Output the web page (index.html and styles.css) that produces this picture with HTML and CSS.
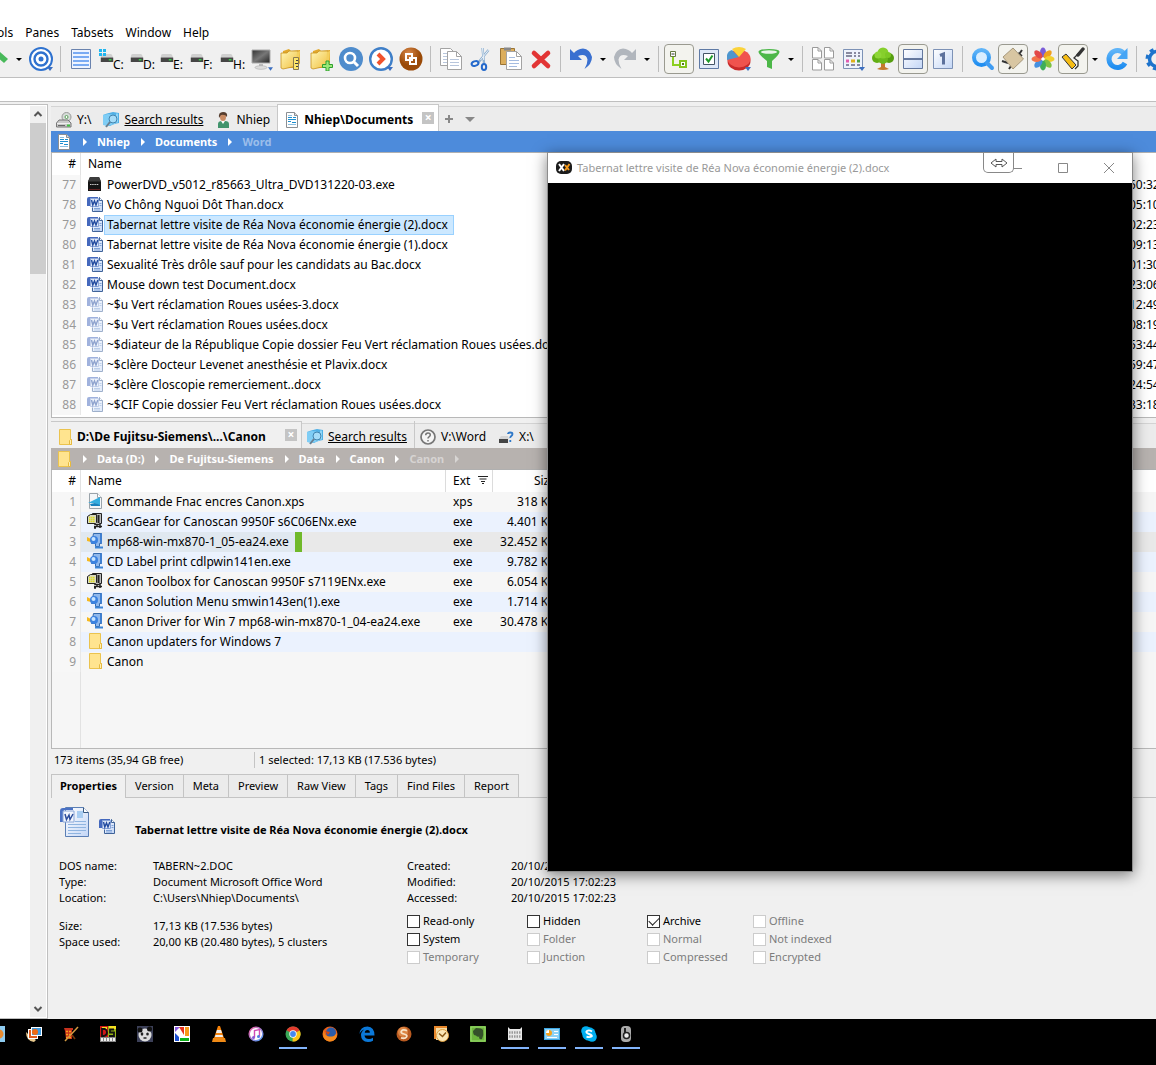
FILE: index.html
```html
<!DOCTYPE html>
<html lang="fr">
<head>
    <meta charset="UTF-8">
    <title>Nhiep\Documents</title>
    <meta name="viewport" content="width=device-width, initial-scale=1">
    <link rel="stylesheet" href="styles.css">
</head>
<body>
    <svg class="defs" aria-hidden="true">
        <defs>
            <linearGradient id="gFolder" x1="0" y1="0" x2="1" y2="1"><stop offset="0" stop-color="#fff6b8"/><stop offset="1" stop-color="#f0bf3c"/></linearGradient>
            <linearGradient id="gBlue" x1="0" y1="0" x2="0" y2="1"><stop offset="0" stop-color="#5fb4f8"/><stop offset="1" stop-color="#1f8df0"/></linearGradient>
            <linearGradient id="gPale" x1="0" y1="0" x2="1" y2="1"><stop offset="0" stop-color="#ffffff"/><stop offset="1" stop-color="#c3d6f6"/></linearGradient>
            <linearGradient id="gScreen" x1="0" y1="0" x2="1" y2="1"><stop offset="0" stop-color="#333"/><stop offset=".5" stop-color="#777"/><stop offset="1" stop-color="#222"/></linearGradient>
            <radialGradient id="gBrown" cx=".4" cy=".25"><stop offset="0" stop-color="#d9884a"/><stop offset="1" stop-color="#9a4a08"/></radialGradient>
            <linearGradient id="gNotes" x1="0" y1="0" x2="1" y2="1"><stop offset="0" stop-color="#f25ba0"/><stop offset="1" stop-color="#4aa0f8"/></linearGradient>
        </defs>
        <!-- file list icons -->
        <symbol id="word" viewBox="0 0 16 16">
            <path d="M4.500 1.500h8l3 3v11h-11z" fill="url(#gPale)"/>
            <path d="M12 1.500h.5l3 3v11h-10v-4" fill="none" stroke="#3f6399"/>
            <path d="M12.500 1.500v3h3" fill="#fff" stroke="#3f6399"/>
            <path d="M7 12.500h6M7 14h6M12.500 7.500h2M12.500 9.500h2" stroke="#7ea2d8"/>
            <path d="M0 3Q0 1 2 1h9v1H4v8H0z" fill="#4468bd"/>
            <path d="M3.500 2.500h8v8h-8z" fill="#dfe8f8" stroke="#8aa4d8"/>
            <path d="M4.500 4l1.300 5 1.700-4 1.500 4L10.800 4" fill="none" stroke="#234b9f" stroke-width="1.400"/>
        </symbol>
        <symbol id="dvd" viewBox="0 0 16 16">
            <path d="M3 1h9l2 4.500V15H1V5.500z" fill="#151515"/><path d="M3 1h9l2 4.500H1z" fill="#3c3c3c"/><path d="M3 8.500h9" stroke="#ccc" stroke-dasharray="1.500 .7"/><path d="M2 13.500h11" stroke="#622"/>
        </symbol>
        <symbol id="xps" viewBox="0 0 16 16">
            <path d="M2.500.5h8l4 4v11h-12z" fill="#f4f6f8" stroke="#9aa3aa"/><path d="M10.500.5v4h4" fill="#fff" stroke="#9aa3aa"/><path d="M1 10l12-6v9L8 10z" fill="#35aee0"/><path d="M3 11l5-1 5 2v1H4z" fill="#1982bd"/>
        </symbol>
        <symbol id="zip" viewBox="0 0 16 16">
            <path d="M5.500.5h9v10h-2v1h-5v-2z" fill="#bdbdbd" stroke="#222"/><path d="M.5 3.500l3-2h6v8l-1 1h-8z" fill="#d9d9c0" stroke="#222"/><path d="M2 4.500h6M2 6.500h6M2 8.500h6" stroke="#dedc28" stroke-width="1.300" stroke-dasharray="1.500 .5"/><path d="M11.500 2v8" stroke="#222" stroke-width="2"/><path d="M7 13.500h8M10 11.500v2M13 11v4M7 15h2" stroke="#222" stroke-width="1.500"/>
        </symbol>
        <symbol id="setup" viewBox="0 0 16 16">
            <path d="M6.500.5h8v10h-2v3h-4v-3h-4z" fill="#8fb8ec" stroke="#3369ad"/><path d="M13 .5h2v10h-2z" fill="#3f7fd0"/><path d="M8 14.500h8" stroke="#3b84d6" stroke-width="2"/><path d="M0 4l4 2v3L0 8z" fill="#f5b81f"/><circle cx="7" cy="7" r="4" fill="#3b82e0"/><circle cx="6.500" cy="6" r="2" fill="#c7e4ff"/>
        </symbol>
        <symbol id="folder" viewBox="0 0 16 16">
            <path d="M2.500.5h11v10h1v5h-12z" fill="#ffe48f" stroke="#ebc34e"/><path d="M12.500 15.500v-4l1-1h1v5z" fill="#fff0b4" stroke="#e6b93f"/>
        </symbol>
        <symbol id="doc" viewBox="0 0 16 16">
            <path d="M2.500.5h8l3 3v12h-11z" fill="#fff" stroke="#8b8f93"/><path d="M10.500.5v3h3" fill="#ddd" stroke="#8b8f93"/><path d="M4 5.500h4M9 5.500h3M4 7.500h8M4 9.500h3M8 10.500h4" stroke="#1d8fd0"/><path d="M4 12.500h8M4 3.500h4" stroke="#8cbfe0"/>
        </symbol>
        <symbol id="results" viewBox="0 0 16 16">
            <path d="M0 3l4-1.500L10 0l6 1v10l-5 1-4 2-6-1z" fill="#4fb0e6"/><path d="M0 3l5-1 7 1v9l-7 2-5-1z" fill="#7fcdf5"/><path d="M13 1.500h2v9h-2z" fill="#8fd6f8"/><circle cx="10" cy="7" r="4" fill="#a5dcf8" stroke="#4285b0"/><path d="M7 10l-4 5" stroke="#6a7f90" stroke-width="2"/>
        </symbol>
        <symbol id="user" viewBox="0 0 16 16">
            <path d="M3 16v-4q0-3 4-3h3q4 0 4 3v4z" fill="#41946c"/><path d="M6 9l2 3 2-3z" fill="#fff"/><ellipse cx="8" cy="5" rx="3" ry="4" fill="#c98b63"/><path d="M4 6q-1-6 4-6 5 0 4 5-2-3-6-2z" fill="#563d2e"/>
        </symbol>
        <symbol id="netdrive" viewBox="0 0 16 16">
            <circle cx="10.500" cy="5" r="4.500" fill="#d6dcd8" stroke="#999"/><circle cx="10.500" cy="5" r="1.500" fill="#fff" stroke="#58a058"/><path d="M3 8h9l3 3v4H.500v-4z" fill="#c9c9c9" stroke="#777"/><path d="M1 11.500h13" stroke="#eee"/><path d="M2 13.500h7" stroke="#666"/><path d="M11 13.500h3" stroke="#40c040" stroke-width="2"/>
        </symbol>
        <symbol id="help" viewBox="0 0 16 16">
            <circle cx="8" cy="8" r="7" fill="#f6f6f6" stroke="#777" stroke-width="1.700"/><path d="M5.700 6.300q0-2.300 2.300-2.300t2.300 2q0 1-1.300 1.800Q8 8.500 8 9.500M8 11v1.500" fill="none" stroke="#777" stroke-width="1.500"/>
        </symbol>
        <symbol id="qdrive" viewBox="0 0 16 16">
            <path d="M3 7h7l1 3H1z" fill="#d5d5d5"/><path d="M1 10h9v4H1z" fill="#444"/><path d="M10 5q0-1.500 2.200-1.500T14.500 5q0 1-1.200 2t-1 2M12.300 11v2" fill="none" stroke="#2e78c8" stroke-width="1.800"/>
        </symbol>
        <!-- toolbar icons -->
        <symbol id="drive" viewBox="0 0 14 9">
            <path d="M2 0h9q2 0 3 5H0q0-5 2-5z" fill="#d0d0d0"/><path d="M0 4h14v5H0z" fill="#454545"/><path d="M9 6.500h3" stroke="#35e04a" stroke-width="1.500"/>
        </symbol>
        <symbol id="page" viewBox="0 0 10 12">
            <path d="M.5.500h5.500l3.500 3.500v7h-9z" fill="#fff" stroke="#9a9a9a"/><path d="M6 .5v3.500h3.500" fill="none" stroke="#9a9a9a"/>
        </symbol>
        <symbol id="tri" viewBox="0 0 6 4"><path d="M0 0h6L3 4z" fill="#3c6fc0"/></symbol>
        <symbol id="yfolder" viewBox="0 0 24 24">
            <path d="M4 4l6-2 2 2 9-1v13l-3 5H3z" fill="#e1a82c"/><path d="M2 6h6l2-2h9l-1 15-14 3-2-1z" fill="url(#gFolder)" stroke="#c8921f" stroke-width=".8"/><path d="M18 5l3-1-1 13-3 3z" fill="#f3cf5e"/>
        </symbol>
    </svg>

    <nav class="menubar">
        <button>Tools</button>
        <button>Panes</button>
        <button>Tabsets</button>
        <button>Window</button>
        <button>Help</button>
    </nav>

    <div class="toolbar">
        <div class="tools">
            <button class="tool" aria-label="Forward"><svg viewBox="0 0 24 24"><path d="M15 5l8 7-4 4-8-7z" fill="#48b95a"/></svg></button>
            <button class="caret" aria-label="History"></button>
            <button class="tool" aria-label="Locate"><svg viewBox="0 0 24 24"><circle cx="12" cy="12" r="11" fill="#fff" stroke="#2f72cf" stroke-width="2"/><circle cx="12" cy="12" r="6.500" fill="#fff" stroke="#2f72cf" stroke-width="2.400"/><circle cx="12" cy="12" r="2.500" fill="#2f72cf"/><use href="#tri" x="18" y="20" width="6" height="4"/></svg></button>
            <span class="sep"></span>
            <button class="tool" aria-label="List"><svg viewBox="0 0 24 24"><path d="M2.500 2.500h19v19h-19z" fill="#eef4ff" stroke="#6a83ae"/><path d="M4 6h16M4 10h16M4 14h16M4 18h16" stroke="#7aabf3" stroke-width="2"/></svg></button>
            <button class="tool drv"><svg class="win" viewBox="0 0 7 7"><path d="M0 0h3v3H0zM4 0h3v3H4zM0 4h3v3H0zM4 4h3v3H4z" fill="#1fb5f0"/></svg><svg><use href="#drive"/></svg><span>C:</span></button>
            <button class="tool drv"><svg><use href="#drive"/></svg><span>D:</span></button>
            <button class="tool drv"><svg><use href="#drive"/></svg><span>E:</span></button>
            <button class="tool drv"><svg><use href="#drive"/></svg><span>F:</span></button>
            <button class="tool drv"><svg><use href="#drive"/></svg><span>H:</span></button>
            <button class="tool" aria-label="Computer"><svg viewBox="0 0 24 24"><path d="M3 3h18v13H3z" fill="url(#gScreen)" stroke="#aaa"/><path d="M10 17h4v3h-4z" fill="#bbb"/><ellipse cx="12" cy="20.500" rx="6" ry="1.800" fill="#ddd" stroke="#aaa" stroke-width=".6"/><use href="#tri" x="19" y="20" width="5" height="4"/></svg></button>
            <button class="tool" aria-label="Folder size"><svg viewBox="0 0 24 24"><use href="#yfolder"/><path d="M14.500 10.500h5v12h-5z" fill="#ffe66a" stroke="#8a7a50"/><path d="M17 13.500h2M16 16.500h3M17 19.500h2" stroke="#444"/></svg></button>
            <button class="tool" aria-label="New folder"><svg viewBox="0 0 24 24"><use href="#yfolder"/><path d="M17 14h3v3.500h3.500v3H20V24h-3v-3.500h-3.500v-3H17z" fill="#9be878" stroke="#2fa030"/></svg></button>
            <button class="tool" aria-label="Find"><svg viewBox="0 0 24 24"><circle cx="12" cy="12" r="12" fill="#4f8ccc"/><circle cx="11" cy="11" r="5" fill="none" stroke="#fff" stroke-width="2.600"/><path d="M15 15l4 4" stroke="#fff" stroke-width="3"/></svg></button>
            <button class="tool" aria-label="Go to"><svg viewBox="0 0 24 24"><circle cx="12" cy="12" r="10.800" fill="#fff" stroke="#3f7fc8" stroke-width="2.400"/><path d="M9 7l5 5-5 5" fill="none" stroke="#f0532d" stroke-width="4"/><use href="#tri" x="18" y="20" width="6" height="4"/></svg></button>
            <button class="tool" aria-label="Duplicate"><svg viewBox="0 0 24 24"><circle cx="12" cy="12" r="11.500" fill="url(#gBrown)"/><path d="M7 7h6v6H7zM11 11h6v6h-6z" fill="none" stroke="#fff" stroke-width="2"/></svg></button>
            <span class="sep"></span>
            <button class="tool" aria-label="Copy"><svg viewBox="0 0 24 24"><path d="M1.500 1.500h10l3 3v14h-13z" fill="#fff" stroke="#a3a3a3"/><path d="M4 6.500h6M4 9.500h6M4 12.500h6M4 15.500h6" stroke="#b8c6dc"/><path d="M8.500 4.500h9l5 5v13h-14z" fill="#fff" stroke="#a3a3a3"/><path d="M17.500 4.500v5h5" fill="none" stroke="#a3a3a3"/><path d="M11 12.500h9M11 15.500h9M11 18.500h9" stroke="#b8c6dc"/></svg></button>
            <button class="tool" aria-label="Cut"><svg viewBox="0 0 24 24"><path d="M13.500 1l1.500 15M19.500 3L9 16" stroke="#8fb0d0" stroke-width="2.400"/><path d="M13.500 1l1.200 12M19.500 3l-8 10" stroke="#e8f0f8"/><ellipse cx="6" cy="16.500" rx="3.500" ry="2.300" fill="none" stroke="#2469cc" stroke-width="2" transform="rotate(-20 6 16.500)"/><ellipse cx="15" cy="20" rx="2.200" ry="3" fill="none" stroke="#2469cc" stroke-width="2"/></svg></button>
            <button class="tool" aria-label="Paste"><svg viewBox="0 0 24 24"><path d="M1.500 1.500h14v16h-14z" fill="#dcae5c" stroke="#9a7434"/><path d="M5 .5h7v3H5z" fill="#888"/><path d="M7.500 4.500h10l5 5v13h-15z" fill="#fff" stroke="#a3a3a3"/><path d="M17.500 4.500v5h5" fill="none" stroke="#a3a3a3"/><path d="M10 10.500h6M10 13.500h10M10 16.500h10M10 19.500h8" stroke="#a5bce0"/></svg></button>
            <button class="tool" aria-label="Delete"><svg viewBox="0 0 24 24"><path d="M5 6l14 13M19 6L5 19" stroke="#e23535" stroke-width="4.600" stroke-linecap="round"/></svg></button>
            <span class="sep"></span>
            <button class="tool" aria-label="Undo"><svg viewBox="0 0 24 24"><path d="M1 2v11h12L9 9q8-3 9.500 3.500 0 5-3 9.500 7.500-5 7.500-12Q21 2 14 1.500 8 2 5 6z" fill="#3a70d0"/></svg></button>
            <button class="caret" aria-label="Undo list"></button>
            <button class="tool" aria-label="Redo"><svg viewBox="0 0 24 24"><path d="M23 2v11H11l4-4q-8-3-9.500 3.500 0 5 3 9.500Q1 17 1 10 3 2 10 1.500 16 2 19 6z" fill="#b1b6bd"/></svg></button>
            <button class="caret" aria-label="Redo list"></button>
            <span class="sep"></span>
            <button class="tool pressed" aria-label="Tree"><svg viewBox="0 0 24 24"><path d="M6 10v8h8" fill="none" stroke="#8bcf20" stroke-width="2"/><path d="M3.500 4.500h5v5h-5z" fill="#fff" stroke="#667a44"/><path d="M4.500 7h3" stroke="#333"/><path d="M13 14h6v6h-6z" fill="#fff" stroke="#84c51e" stroke-width="2"/><path d="M15 17h2" stroke="#527d16" stroke-width="2"/></svg></button>
            <button class="tool" aria-label="Checkboxes"><svg viewBox="0 0 24 24"><path d="M2.500 2.500h19v19h-19z" fill="#dfe9f8" stroke="#5f7aa5"/><path d="M6.500 6.500h11v11h-11z" fill="#fff" stroke="#456"/><path d="M9 11.500l2.500 3 4-6" fill="none" stroke="#1e9c2b" stroke-width="2"/></svg></button>
            <button class="tool" aria-label="Statistics"><svg viewBox="0 0 24 24"><ellipse cx="12" cy="14" rx="11.500" ry="9.500" fill="#c92a2a"/><ellipse cx="12" cy="11.500" rx="11.500" ry="9" fill="#f0534e"/><path d="M12 10L0 13V8q1-4 5-5z" fill="#4d96cf"/><path d="M12 10L5 2q7-4 14 0z" fill="#fbd33a"/><use href="#tri" x="18" y="20" width="6" height="4"/></svg></button>
            <button class="tool" aria-label="Filter"><svg viewBox="0 0 24 24"><path d="M1.500 5Q1 2 12 2t10.500 3Q22 8 15 14v8l-5-2v-6Q2 8 1.500 5z" fill="#4cb748"/><ellipse cx="12" cy="5" rx="8" ry="1.800" fill="#e8f5e8"/></svg></button>
            <button class="caret" aria-label="Filter list"></button>
            <span class="sep"></span>
            <button class="tool" aria-label="Tiles"><svg viewBox="0 0 24 24"><use href="#page" x="1" y="0" width="10" height="12"/><use href="#page" x="13" y="0" width="10" height="12"/><use href="#page" x="1" y="12" width="10" height="12"/><use href="#page" x="13" y="12" width="10" height="12"/></svg></button>
            <button class="tool" aria-label="Details"><svg viewBox="0 0 24 24"><path d="M2.500 2.500h19v19h-19z" fill="#eef3fc" stroke="#7d92b6"/><path d="M5 6h6M13 6h2M17 6h2M5 9h6M13 9h2M17 9h2M5 18h3M10 18h4M16 18h3" stroke="#888aa0" stroke-width="2"/><path d="M5 14h3" stroke="#e25cb0" stroke-width="3"/><path d="M10 14h4" stroke="#e0b21c" stroke-width="3"/><path d="M16 14h3" stroke="#4ca043" stroke-width="3"/><use href="#tri" x="18" y="20" width="6" height="4"/></svg></button>
            <button class="tool" aria-label="Branch"><svg viewBox="0 0 24 24"><path d="M10 13h4v7l4 2q-6 2-12 0l4-2z" fill="#c4792c"/><circle cx="6" cy="11" r="5" fill="#62ae14"/><circle cx="18" cy="11" r="5" fill="#569e10"/><circle cx="12" cy="12" r="5" fill="#6bb81b"/><circle cx="12" cy="6" r="5.500" fill="#86cf2c"/><circle cx="7" cy="8" r="3.500" fill="#8ed636"/><circle cx="17" cy="8" r="3" fill="#7cc824"/></svg></button>
            <button class="tool pressed" aria-label="Horizontal panes"><svg viewBox="0 0 24 24"><path d="M2.500 2.500h19v19h-19z" fill="url(#gPale)" stroke="#64789e"/><path d="M3 12h18" stroke="#64789e" stroke-width="2"/></svg></button>
            <button class="tool" aria-label="Single pane"><svg viewBox="0 0 24 24"><path d="M2.500 2.500h19v19h-19z" fill="url(#gPale)" stroke="#7d92b6"/><path d="M9 8.500l3.500-1.500v10.500" fill="none" stroke="#5c719d" stroke-width="3"/></svg></button>
            <span class="sep"></span>
            <button class="tool" aria-label="Search"><svg viewBox="0 0 24 24"><circle cx="10.500" cy="10.500" r="7.500" fill="#d8edff" stroke="url(#gBlue)" stroke-width="4"/><path d="M16 16l5 5" stroke="#3f9cf2" stroke-width="4" stroke-linecap="round"/></svg></button>
            <button class="tool pressed" aria-label="Highlight"><svg viewBox="0 0 24 24"><path d="M21 3L8 22M1 14l6 2M17 6l4 3" stroke="#333" stroke-width="2"/><path d="M12 1l10.500 11L12 22 2 10z" fill="#d8c6a2" stroke="#a6987c"/></svg></button>
            <button class="tool" aria-label="Colors"><svg viewBox="0 0 24 24"><ellipse cx="12" cy="5.500" rx="3" ry="5" fill="#7a5cd8"/><ellipse cx="12" cy="5.500" rx="3" ry="5" fill="#f0a01e" transform="rotate(45 12 12)"/><ellipse cx="12" cy="5.500" rx="3" ry="5" fill="#f2cf2c" transform="rotate(90 12 12)"/><ellipse cx="12" cy="5.500" rx="3" ry="5" fill="#7ec241" transform="rotate(135 12 12)"/><ellipse cx="12" cy="5.500" rx="3" ry="5" fill="#3fae58" transform="rotate(180 12 12)"/><ellipse cx="12" cy="5.500" rx="3" ry="5" fill="#4590e0" transform="rotate(225 12 12)"/><ellipse cx="12" cy="5.500" rx="3" ry="5" fill="#f2734a" transform="rotate(270 12 12)"/><ellipse cx="12" cy="5.500" rx="3" ry="5" fill="#e24848" transform="rotate(315 12 12)"/><circle cx="12" cy="12" r="1.500" fill="#fff"/></svg></button>
            <button class="tool pressed" aria-label="Paint"><svg viewBox="0 0 24 24"><path d="M19 5l-6 6 4 3v5l-3 3" fill="none" stroke="#333" stroke-width="1.300"/><path d="M22 2l-5 6" stroke="#333" stroke-width="3.500" stroke-linecap="round"/><path d="M1 10l4-3 10 11-4 4z" fill="#f6bd14" stroke="#333"/></svg></button>
            <button class="caret" aria-label="Paint list"></button>
            <button class="tool" aria-label="Refresh"><svg viewBox="0 0 24 24"><path d="M19 6.500A8.500 8.500 0 1 0 20 16" fill="none" stroke="url(#gBlue)" stroke-width="5"/><path d="M22.500 1v11H12z" fill="#46a5f5"/></svg></button>
            <span class="sep"></span>
            <button class="tool" aria-label="Settings"><svg viewBox="0 0 24 24"><circle cx="12" cy="12" r="7.500" fill="#f0f0f0" stroke="#1d73cc" stroke-width="3.500"/><circle cx="12" cy="12" r="10" fill="none" stroke="#1d73cc" stroke-width="3" stroke-dasharray="4 3.850"/></svg></button>
        </div>
    </div>
    <div class="addressbar"></div>

    <main class="main">
        <aside class="tree">
            <div class="scrollbar">
                <svg viewBox="0 0 16 16"><path d="M4.500 10L8 6.500l3.500 3.500" fill="none" stroke="#555" stroke-width="2"/></svg>
                <div class="thumb"></div>
                <svg viewBox="0 0 16 16"><path d="M4.500 6L8 9.500 11.500 6" fill="none" stroke="#555" stroke-width="2"/></svg>
            </div>
        </aside>

        <div class="panes">
            <section class="pane">
                <div class="tabs">
                    <button class="tab"><svg><use href="#netdrive"/></svg>Y:\</button>
                    <button class="tab"><svg><use href="#results"/></svg><u>Search results</u></button>
                    <button class="tab"><svg><use href="#user"/></svg>Nhiep</button>
                    <div class="tab active white"><svg><use href="#doc"/></svg>Nhiep\Documents<button class="close" aria-label="Close tab"></button></div>
                    <button class="newtab" aria-label="New tab"><svg viewBox="0 0 8 8"><path d="M4 0v8M0 4h8" stroke="#888" stroke-width="2"/></svg></button>
                    <button class="newtab" aria-label="Tab list"><svg class="wide" viewBox="0 0 10 8"><path d="M0 2h10L5 7z" fill="#888"/></svg></button>
                </div>
                <nav class="crumbs blue">
                    <svg><use href="#doc"/></svg>
                    <a href="#">Nhiep</a><a href="#">Documents</a><a href="#" class="dim">Word</a>
                </nav>
                <div class="list docs">
                    <table>
                        <colgroup><col class="c-num"><col><col class="c-time"></colgroup>
                        <thead><tr><th>#</th><th class="name">Name</th><th></th></tr></thead>
                        <tbody>
                            <tr><td>77</td><td class="name"><svg><use href="#dvd"/></svg><span>PowerDVD_v5012_r85663_Ultra_DVD131220-03.exe</span></td><td>50:32</td></tr>
                            <tr><td>78</td><td class="name"><svg><use href="#word"/></svg><span>Vo Chông Nguoi Dôt Than.docx</span></td><td>05:10</td></tr>
                            <tr><td>79</td><td class="name"><svg><use href="#word"/></svg><span class="selected">Tabernat lettre visite de Réa Nova économie énergie (2).docx</span></td><td>02:23</td></tr>
                            <tr><td>80</td><td class="name"><svg><use href="#word"/></svg><span>Tabernat lettre visite de Réa Nova économie énergie (1).docx</span></td><td>09:13</td></tr>
                            <tr><td>81</td><td class="name"><svg><use href="#word"/></svg><span>Sexualité Très drôle sauf pour les candidats au Bac.docx</span></td><td>01:30</td></tr>
                            <tr><td>82</td><td class="name"><svg><use href="#word"/></svg><span>Mouse down test Document.docx</span></td><td>23:06</td></tr>
                            <tr class="hid"><td>83</td><td class="name"><svg><use href="#word"/></svg><span>~$u Vert réclamation Roues usées-3.docx</span></td><td>12:49</td></tr>
                            <tr class="hid"><td>84</td><td class="name"><svg><use href="#word"/></svg><span>~$u Vert réclamation Roues usées.docx</span></td><td>08:19</td></tr>
                            <tr class="hid"><td>85</td><td class="name"><svg><use href="#word"/></svg><span>~$diateur de la République Copie dossier Feu Vert réclamation Roues usées.docx</span></td><td>53:44</td></tr>
                            <tr class="hid"><td>86</td><td class="name"><svg><use href="#word"/></svg><span>~$clère Docteur Levenet anesthésie et Plavix.docx</span></td><td>59:47</td></tr>
                            <tr class="hid"><td>87</td><td class="name"><svg><use href="#word"/></svg><span>~$clère Closcopie remerciement..docx</span></td><td>24:54</td></tr>
                            <tr class="hid"><td>88</td><td class="name"><svg><use href="#word"/></svg><span>~$CIF Copie dossier Feu Vert réclamation Roues usées.docx</span></td><td>33:18</td></tr>
                        </tbody>
                    </table>
                </div>
            </section>

            <section class="pane second">
                <div class="tabs">
                    <div class="tab active"><svg><use href="#folder"/></svg>D:\De Fujitsu-Siemens\...\Canon<button class="close" aria-label="Close tab"></button></div>
                    <button class="tab boxed"><svg><use href="#results"/></svg><u>Search results</u></button>
                    <button class="tab"><svg><use href="#help"/></svg>V:\Word</button>
                    <button class="tab"><svg><use href="#qdrive"/></svg>X:\</button>
                    <button class="tab" aria-label="Computer"><svg viewBox="0 0 16 16"><path d="M1 2h14v9H1z" fill="#2f8fd0"/></svg></button>
                </div>
                <nav class="crumbs grey">
                    <svg><use href="#folder"/></svg>
                    <a href="#">Data (D:)</a><a href="#">De Fujitsu-Siemens</a><a href="#">Data</a><a href="#">Canon</a><a href="#" class="dim tail">Canon</a>
                </nav>
                <div class="list files">
                    <table>
                        <colgroup><col class="c-num"><col class="c-name"><col class="c-ext"><col class="c-size"><col></colgroup>
                        <thead><tr><th>#</th><th class="name">Name</th><th>Ext<svg class="sort" viewBox="0 0 10 8"><path d="M0 .5h10M1.500 3h7M3 5.500h4M4 7.500h2" stroke="#222"/></svg></th><th>Size</th><th></th></tr></thead>
                        <tbody>
                            <tr><td>1</td><td class="name"><svg><use href="#xps"/></svg><span>Commande Fnac encres Canon.xps</span></td><td>xps</td><td>318 KB</td><td></td></tr>
                            <tr><td>2</td><td class="name"><svg><use href="#zip"/></svg><span>ScanGear for Canoscan 9950F s6C06ENx.exe</span></td><td>exe</td><td>4.401 KB</td><td></td></tr>
                            <tr class="current"><td>3</td><td class="name"><div class="hot"><svg><use href="#setup"/></svg><span>mp68-win-mx870-1_05-ea24.exe</span></div></td><td>exe</td><td>32.452 KB</td><td></td></tr>
                            <tr><td>4</td><td class="name"><svg><use href="#setup"/></svg><span>CD Label print cdlpwin141en.exe</span></td><td>exe</td><td>9.782 KB</td><td></td></tr>
                            <tr><td>5</td><td class="name"><svg><use href="#zip"/></svg><span>Canon Toolbox for Canoscan 9950F s7119ENx.exe</span></td><td>exe</td><td>6.054 KB</td><td></td></tr>
                            <tr><td>6</td><td class="name"><svg><use href="#setup"/></svg><span>Canon Solution Menu smwin143en(1).exe</span></td><td>exe</td><td>1.714 KB</td><td></td></tr>
                            <tr><td>7</td><td class="name"><svg><use href="#setup"/></svg><span>Canon Driver for Win 7 mp68-win-mx870-1_04-ea24.exe</span></td><td>exe</td><td>30.478 KB</td><td></td></tr>
                            <tr><td>8</td><td class="name"><svg><use href="#folder"/></svg><span>Canon updaters for Windows 7</span></td><td></td><td></td><td></td></tr>
                            <tr><td>9</td><td class="name"><svg><use href="#folder"/></svg><span>Canon</span></td><td></td><td></td><td></td></tr>
                        </tbody>
                    </table>
                </div>
            </section>

            <div class="status">
                <span>173 items (35,94 GB free)</span>
                <span>1 selected: 17,13 KB (17.536 bytes)</span>
            </div>

            <section class="info">
                <div class="info-tabs">
                    <button class="on">Properties</button>
                    <button>Version</button>
                    <button>Meta</button>
                    <button>Preview</button>
                    <button>Raw View</button>
                    <button>Tags</button>
                    <button>Find Files</button>
                    <button>Report</button>
                </div>
                <div class="info-title">
                    <svg class="big" viewBox="0 0 32 32"><path d="M6.500 1.500h18l5 5v24h-23z" fill="url(#gPale)" stroke="#5b7fb5"/><path d="M24.500 1.500v5h5" fill="#fff" stroke="#35577f"/><path d="M18 5h6v7h-6z" fill="#a8cdf2"/><path d="M16 15.500h11M9 18.500h18M9 21.500h18M9 24.500h18M9 27.500h13" stroke="#8fb4e0"/><path d="M1 5q0-3 3-3h10v2H5v12H1z" fill="#4b72c4"/><path d="M4 5h11v11H4z" fill="#f2f6fd" stroke="#8aa6d8"/><path d="M6 8l1.500 5.500L10 9l1 4.500L14 8" fill="none" stroke="#2c4d9c" stroke-width="1.500"/></svg>
                    <svg class="small"><use href="#word"/></svg>
                    <h2>Tabernat lettre visite de Réa Nova économie énergie (2).docx</h2>
                </div>
                <div class="info-body">
                    <dl>
                        <dt>DOS name:</dt><dd>TABERN~2.DOC</dd>
                        <dt>Type:</dt><dd>Document Microsoft Office Word</dd>
                        <dt>Location:</dt><dd>C:\Users\Nhiep\Documents\</dd>
                        <dt class="gap">Size:</dt><dd class="gap">17,13 KB (17.536 bytes)</dd>
                        <dt>Space used:</dt><dd>20,00 KB (20.480 bytes), 5 clusters</dd>
                    </dl>
                    <div>
                        <dl class="dates">
                            <dt>Created:</dt><dd>20/10/2015 17:02:23</dd>
                            <dt>Modified:</dt><dd>20/10/2015 17:02:23</dd>
                            <dt>Accessed:</dt><dd>20/10/2015 17:02:23</dd>
                        </dl>
                        <div class="attrs">
                            <label><input type="checkbox">Read-only</label>
                            <label><input type="checkbox">Hidden</label>
                            <label><input type="checkbox" checked>Archive</label>
                            <label><input type="checkbox" disabled>Offline</label>
                            <label><input type="checkbox">System</label>
                            <label><input type="checkbox" disabled>Folder</label>
                            <label><input type="checkbox" disabled>Normal</label>
                            <label><input type="checkbox" disabled>Not indexed</label>
                            <label><input type="checkbox" disabled>Temporary</label>
                            <label><input type="checkbox" disabled>Junction</label>
                            <label><input type="checkbox" disabled>Compressed</label>
                            <label><input type="checkbox" disabled>Encrypted</label>
                        </div>
                    </div>
                </div>
            </section>
        </div>
    </main>

    <!-- floating preview -->
    <div class="preview">
        <div class="titlebar">
            <svg class="logo" viewBox="0 0 16 16"><rect x="0" y="1" width="16" height="13" rx="5" fill="#1c1c1c"/><path d="M3 4l5 7M8 4l-5 7" stroke="#fff" stroke-width="2"/><path d="M9 5l4 5M13.500 4L9 10.500" stroke="#f59a1b" stroke-width="2"/></svg>
            <span>Tabernat lettre visite de Réa Nova économie énergie (2).docx</span>
            <button aria-label="Minimize"><svg viewBox="0 0 10 10"><path d="M0 5.500h10" stroke="#888"/></svg></button>
            <button aria-label="Maximize"><svg viewBox="0 0 10 10"><path d="M.5.500h9v9h-9z" fill="none" stroke="#888"/></svg></button>
            <button aria-label="Close"><svg viewBox="0 0 10 10"><path d="M0 0l10 10M10 0L0 10" stroke="#888"/></svg></button>
        </div>
        <button class="resize" aria-label="Resize"><svg viewBox="0 0 18 10"><path d="M1 5l5-4v2.500h6V1l5 4-5 4V6.500H6V9z" fill="#fff" stroke="#555"/></svg></button>
        <div class="screen"></div>
    </div>

    <footer class="taskbar">
        <button aria-label="Photos"><svg viewBox="0 0 16 16"><path d="M0 0h16v16H0z" fill="#f3b27a"/><path d="M9 0h7v16H9z" fill="#8ecbf0"/><circle cx="10" cy="8" r="4.500" fill="#e88a30"/></svg></button>
        <button aria-label="Gallery"><svg viewBox="0 0 16 16"><path d="M0 6q0 9 8 10l2-2-8-6z" fill="#e8c98d"/><path d="M2 3h10v10H2z" fill="#fff"/><path d="M3 4h8v8H3z" fill="#e25b1a"/><path d="M5 1h11v9H5z" fill="#fff"/><path d="M6 2h9v7H6z" fill="#3f9be0"/><circle cx="9" cy="6" r="3" fill="#f06a12"/></svg></button>
        <button aria-label="Painter"><svg viewBox="0 0 16 16"><path d="M1 2h9v2H9v9H3L2 5z" fill="#c8321e"/><path d="M3 5.500h5M3 8.500h5M3 11.500h5" stroke="#f6a218" stroke-width="1.500" stroke-dasharray="2 1"/><path d="M15 1L2 15" stroke="#d39a42" stroke-width="1.500"/><path d="M9 9l3 4" stroke="#72360a" stroke-width="1.500"/></svg></button>
        <button aria-label="DS"><svg viewBox="0 0 16 16"><path d="M0 0h8v16H0z" fill="#d01818"/><path d="M8 0h8v16H8z" fill="#96b414"/><path d="M2 1h5v2H2zM9 0h7v3H9z" fill="#f4e020"/><path d="M2 3h3q2 1 2 3.500T4 10H2zM14 3.500h-4v3h4V10H9" fill="none" stroke="#111" stroke-width="1.800"/><path d="M0 11h16v5H0z" fill="#888"/><path d="M1 13.500h14" stroke="#eee" stroke-width="3" stroke-dasharray="2 1"/></svg></button>
        <button aria-label="Panda"><svg viewBox="0 0 16 16"><path d="M0 0h16v16H0z" fill="#3c4058"/><ellipse cx="8" cy="9" rx="6.500" ry="6.500" fill="#ddd"/><circle cx="3" cy="4" r="2.500" fill="#111"/><circle cx="12.500" cy="3" r="2.500" fill="#111"/><ellipse cx="5" cy="8" rx="1.300" ry="1.800" fill="#222"/><ellipse cx="10.500" cy="8" rx="1.300" ry="1.600" fill="#222"/><path d="M6.500 12h3" stroke="#222" stroke-width="1.500"/></svg></button>
        <button aria-label="Pictures"><svg viewBox="0 0 16 16"><path d="M0 0h16v16H0z" fill="#fff"/><path d="M1 1h5L1 6z" fill="#8a5ce0"/><path d="M1 7l4 4v4H1z" fill="#1b4fd0"/><path d="M5 1h5v8z" fill="#e8301c"/><path d="M11 1h4v9h-4z" fill="#f79a18"/><path d="M6 12h9v3H6z" fill="#0cae18"/></svg></button>
        <button aria-label="VLC"><svg viewBox="0 0 16 16"><path d="M7 0h2l4 12H3z" fill="#f5820a"/><path d="M6 4h4l1 3H5zM4.500 9h7l.5 2H4z" fill="#eee"/><path d="M2 12h12l1 4H1z" fill="#f08a16"/></svg></button>
        <button aria-label="iTunes"><svg viewBox="0 0 16 16"><circle cx="8" cy="8" r="6.800" fill="#fff" stroke="url(#gNotes)" stroke-width="1.500"/><path d="M6.500 11.500V4.500l5-1v7" fill="none" stroke="#d14bb4" stroke-width="1.400"/><circle cx="5.500" cy="11.500" r="1.500" fill="#8a55d8"/><circle cx="10.500" cy="10.500" r="1.500" fill="#4d7fe0"/></svg></button>
        <button class="open" aria-label="Chrome"><svg viewBox="0 0 16 16"><circle cx="8" cy="8" r="7.500" fill="#3aa757"/><path d="M8 8L1.500 4.200A7.500 7.500 0 0 1 14.700 4.500z" fill="#e33b2e"/><path d="M8 8l6.700-3.500A7.500 7.500 0 0 1 7.500 15.500z" fill="#fbc116"/><circle cx="8" cy="8" r="3.700" fill="#fff"/><circle cx="8" cy="8" r="2.900" fill="#4688f1"/></svg></button>
        <button aria-label="Firefox"><svg viewBox="0 0 16 16"><circle cx="8" cy="8" r="7.500" fill="#e8601c"/><circle cx="9" cy="6.500" r="5" fill="#2a5caa"/><path d="M2 3q0 6 3 7t7 0l3-3q0 9-8 8.500Q-1 14 2 3z" fill="#f58a1c"/><path d="M3 5l5 1-2 3z" fill="#d8460e"/></svg></button>
        <button aria-label="Edge"><svg viewBox="0 0 16 16"><path d="M.5 8Q1 .500 8.500.500 15.500 1 15.500 9.500H5.500q.5 3.500 4.500 3.500 2 0 4-1.200v3q-2 1.200-5 1.200-7-.5-7-7 0-3.500 3.500-5.500Q2 4 .500 8zM5.800 6.800h5Q11 4 8.500 4T5.800 6.800z" fill="#0b78d8"/></svg></button>
        <button aria-label="S"><svg viewBox="0 0 16 16"><circle cx="8" cy="8" r="7.500" fill="#b85a20"/><circle cx="7" cy="6" r="5" fill="#dc8644"/><path d="M11 4.800Q7 3 5.500 5t2.500 3 2.500 3-5.500.8" fill="none" stroke="#f8e4c8" stroke-width="1.800"/></svg></button>
        <button aria-label="Outlook"><svg viewBox="0 0 16 16"><path d="M1 0h13v13H1z" fill="#e8882c"/><path d="M3 2h11v12H3z" fill="#f7dca4"/><circle cx="9.500" cy="9.500" r="6" fill="#fbe8b8" stroke="#e0a040"/><path d="M6 7.500l3.500 3L13 6.500" fill="none" stroke="#8a5a18" stroke-width="1.500"/></svg></button>
        <button aria-label="Evernote"><svg viewBox="0 0 16 16"><path d="M0 0h16v16H0z" fill="#6cb53c"/><path d="M1 1h14v14H1z" fill="none" stroke="#9adb70"/><path d="M3 5l3-3q6 0 7 2 1 5-1 9-3 1-3-2l2-.5q-4 1-5-1-3 0-3-4.500z" fill="#34502a"/></svg></button>
        <button class="open" aria-label="Basic Tools"><svg viewBox="0 0 16 16"><path d="M1 1l2 2h10l2-2v13H1z" fill="#e8e8e8"/><path d="M2 6.500h12M2 10.500h12" stroke="#999" stroke-width="2.500" stroke-dasharray="1.500 1"/></svg></button>
        <button class="open" aria-label="Control panel"><svg viewBox="0 0 16 16"><path d="M0 2h16v12H0z" fill="#3fa8e4"/><path d="M1 3h14v10H1z" fill="#8dd2f6"/><circle cx="5" cy="7" r="3" fill="#f6a21c"/><path d="M5 4v3H2a3 3 0 0 1 3-3z" fill="#fff"/><path d="M10 5.500h4M10 8.500h4M3 11.500h10" stroke="#fff"/></svg></button>
        <button class="open" aria-label="Skype"><svg viewBox="0 0 16 16"><circle cx="5" cy="5" r="4.800" fill="#00aff0"/><circle cx="11" cy="11" r="4.800" fill="#00aff0"/><circle cx="8" cy="8" r="6.800" fill="#00aff0"/><path d="M11 5.500Q8 3.500 6 5t2 3 2.500 2.500-5 .3" fill="none" stroke="#fff" stroke-width="1.900"/></svg></button>
        <button class="open" aria-label="Mouse"><svg viewBox="0 0 16 16"><rect x="3" y="0" width="10" height="16" rx="4" fill="#aaa"/><path d="M7 2v5" stroke="#222" stroke-width="2"/><circle cx="8.500" cy="9.500" r="3" fill="#eee" stroke="#222" stroke-width="1.500"/></svg></button>
    </footer>
</body>
</html>
```
FILE: styles.css
```css
* {
    box-sizing: border-box;
}

body {
    margin: 0;
    height: 100vh;
    display: flex;
    flex-direction: column;
    overflow: hidden;
    position: relative;
    background-color: #f0f0f0;
    color: #000;
    font-family: "Noto Sans", "Open Sans", sans-serif;
    font-size: 12px;
    line-height: 16px;
}

button {
    font: inherit;
    color: inherit;
    background: none;
    border: none;
    padding: 0;
    margin: 0;
    flex: none;
}

svg {
    display: block;
    flex: none;
    width: 16px;
    height: 16px;
}

.defs {
    position: absolute;
    width: 0;
    height: 0;
}

/* menu and toolbar */
.menubar {
    display: flex;
    gap: 12px;
    height: 41px;
    padding-top: 25px;
    background-color: #fff;
    margin-left: -16px;
}

.menubar button {
    height: 16px;
}

.toolbar {
    height: 37px;
    border-bottom: 1px solid #bfbfbf;
    overflow: hidden;
}

.tools {
    display: flex;
    align-items: center;
    height: 36px;
    margin-left: -18px;
}

.tool {
    width: 30px;
    height: 30px;
    display: flex;
    align-items: center;
    justify-content: center;
    border: 1px solid transparent;
    border-radius: 4px;
    position: relative;
}

.tool svg {
    width: 24px;
    height: 24px;
}

.tool.pressed {
    background-color: #f3f3ee;
    border-color: #9a9a90;
}

.tool.drv {
    align-items: flex-start;
    justify-content: flex-start;
    padding: 9px 0 0 3px;
}

.drv svg {
    width: 14px;
    height: 8px;
}

.drv .win {
    position: absolute;
    left: 2px;
    top: 4px;
    width: 7px;
    height: 7px;
}

.drv span {
    padding-top: 3px;
    margin-left: -1px;
}

.caret {
    width: 14px;
    height: 30px;
    display: flex;
    align-items: center;
    justify-content: center;
}

.caret::before {
    content: "";
    border: 3px solid transparent;
    border-top-color: #000;
    border-bottom: none;
}

.sep {
    flex: none;
    width: 1px;
    height: 26px;
    margin: 0 5px 0 4px;
    background-color: #bdbdbd;
}

.addressbar {
    height: 24px;
    background-color: #fff;
    border-bottom: 1px solid #bfbfbf;
}

/* left tree */
.main {
    flex: 1;
    min-height: 0;
    display: flex;
    padding-top: 2px;
}

.tree {
    width: 48px;
    background-color: #fff;
    border: solid #bfbfbf;
    border-width: 1px 1px 1px 0;
    display: flex;
    justify-content: flex-end;
    padding: 1px;
}

.scrollbar {
    width: 16px;
    background-color: #f0f0f0;
    display: flex;
    flex-direction: column;
}

.thumb {
    height: 151px;
    margin-top: 1px;
    margin-bottom: auto;
    background-color: #cdcdcd;
}

/* panes */
.panes {
    flex: 1;
    min-width: 0;
    display: flex;
    flex-direction: column;
    padding-left: 3px;
}

.pane {
    display: flex;
    flex-direction: column;
}

.pane.second {
    flex: 1;
    min-height: 0;
    margin-top: 3px;
}

.tabs {
    display: flex;
    height: 27px;
    overflow: hidden;
    background: linear-gradient(#f0f0f0 2px, #d4d4d4 2px, #d4d4d4 3px, #ececec 3px);
}

.tab {
    display: flex;
    align-items: center;
    gap: 5px;
    padding: 5px 7px 0 5px;
}

.tab.active {
    min-width: 162px;
    font-weight: bold;
    gap: 4px;
    padding: 3px 4px 0 6px;
    background-color: #f0f0f0;
    border: solid #c8c8c8;
    border-width: 1px 1px 0 0;
}

.second .tab.active {
    min-width: 251px;
}

.tab.active.white {
    background-color: #fff;
    border-left-width: 1px;
}

.tab.boxed {
    border-right: 1px solid #c8c8c8;
}

.close {
    width: 12px;
    height: 12px;
    margin: 0 0 4px auto;
    display: flex;
    align-items: center;
    justify-content: center;
    background-color: #c4c4c4;
    font-size: 12px;
    font-weight: bold;
    line-height: 12px;
    color: #fff;
}

.close::before {
    content: "×";
}

.newtab {
    display: flex;
    align-items: center;
    padding: 3px 6px 0;
}

.newtab svg {
    width: 8px;
    height: 8px;
}

.newtab .wide {
    width: 10px;
}

.crumbs {
    display: flex;
    align-items: center;
    height: 22px;
    padding-left: 5px;
    font-size: 11px;
    font-weight: bold;
    color: #fff;
    border-bottom: 1px solid #b0b0b0;
}

.crumbs.blue {
    background-color: #4d8bdb;
}

.crumbs.grey {
    background-color: #b7b2af;
}

.crumbs a {
    display: flex;
    align-items: center;
    color: inherit;
    text-decoration: none;
}

.crumbs a::before,
.crumbs .tail::after {
    content: "";
    border: 4px solid transparent;
    border-left-color: #fff;
    border-right: none;
    margin: 0 10px 0 11px;
}

.crumbs .dim {
    color: rgba(255, 255, 255, 0.45);
}

.crumbs .tail::after {
    border-left-color: rgba(255, 255, 255, 0.45);
}

/* file lists */
.list {
    border: solid #b8b8b8;
    border-width: 0 0 1px 1px;
    overflow: hidden;
    background-color: #fff;
}

.docs {
    padding-bottom: 2px;
}

.files {
    flex: 1;
    background: linear-gradient(90deg, #f6f6f6 28px, #e2e2e2 28px, #e2e2e2 29px, #f6f6f6 29px);
}

table {
    width: 100%;
    table-layout: fixed;
    border-collapse: separate;
    border-spacing: 0;
}

.c-num {
    width: 28px;
}

.c-time {
    width: 27px;
}

.c-name {
    width: 365px;
}

.c-ext {
    width: 47px;
}

.c-size {
    width: 68px;
}

th,
td {
    height: 20px;
    padding: 0;
    font-weight: normal;
    text-align: left;
    white-space: nowrap;
}

th {
    height: 22px;
    background-color: #fff;
}

th:first-child,
td:first-child {
    text-align: right;
    padding-right: 4px;
}

td:first-child {
    color: #999;
    background-color: #f7f7f7;
}

th.name {
    padding-left: 7px;
    border-left: 1px solid #e2e2e2;
}

td.name {
    padding-left: 6px;
    border-left: 1px solid #e8e8e8;
}

.name svg {
    float: left;
    margin-top: 1px;
}

.name span {
    float: left;
    height: 20px;
    margin-left: 1px;
    padding: 0 5px 0 2px;
    border: 1px solid transparent;
    line-height: 18px;
}

.name span.selected {
    background-color: #cce8ff;
    border-color: #99d1ff;
}

.hid svg {
    opacity: 0.5;
}

.files th:nth-child(n+3),
.files td:nth-child(3) {
    border-left: 1px solid #dcdcdc;
    padding-left: 7px;
}

.files td:nth-child(3) {
    border-color: transparent;
}

.files th:nth-child(5) {
    border: none;
}

.files th:nth-child(4),
.files td:nth-child(4) {
    text-align: right;
    padding-right: 4px;
}

.files tbody tr:nth-child(even) td:nth-child(n+2) {
    background-color: #ebf2fe;
}

.files tbody .current td:nth-child(n+2) {
    background-color: #e9e9e9;
}

.hot {
    float: left;
    margin-left: -6px;
    padding-left: 6px;
    background-color: #e0e8f0;
    border-right: 7px solid #70b92a;
}

.sort {
    display: inline-block;
    width: 10px;
    height: 8px;
    margin-left: 8px;
    vertical-align: 1px;
}

/* status line */
.status {
    display: flex;
    align-items: center;
    height: 24px;
    padding: 0 0 2px 3px;
    font-size: 11px;
}

.status span {
    width: 200px;
    white-space: nowrap;
}

.status span + span {
    padding-left: 4px;
    border-left: 1px solid #c4c4c4;
}

/* file properties */
.info {
    font-size: 11px;
    height: 246px;
}

.info-tabs {
    display: flex;
    height: 25px;
    padding-top: 1px;
    background: linear-gradient(#f0f0f0 24px, #c4c4c4 24px);
}

.info-tabs button {
    padding: 0 9px 1px;
    border: solid #c4c4c4;
    border-width: 1px 1px 1px 0;
    background-color: #ebebeb;
}

.info-tabs .on {
    font-weight: bold;
    padding: 0 8px 2px;
    background-color: #f0f0f0;
    border-width: 1px 1px 0 1px;
}

.info-title {
    display: flex;
    align-items: flex-end;
    padding: 8px 0 0 8px;
}

.info-title .big {
    width: 32px;
    height: 32px;
}

.info-title .small {
    margin: 0 20px 4px 8px;
}

.info-title h2 {
    margin: 0;
    font-size: 11px;
}

.info-body {
    display: flex;
    padding: 20px 0 0 8px;
}

dl {
    display: grid;
    grid-template-columns: 94px 254px;
    align-content: start;
    margin: 0;
    white-space: nowrap;
}

dl.dates {
    grid-template-columns: 104px 1fr;
}

dd {
    margin: 0;
}

.gap {
    padding-top: 12px;
}

.attrs {
    display: grid;
    grid-template-columns: 120px 120px 106px 120px;
    padding-top: 6px;
}

.attrs label {
    display: flex;
    align-items: center;
    gap: 3px;
    height: 18px;
}

.attrs label:has(:disabled) {
    color: #7c7c7c;
}

.attrs input {
    appearance: none;
    width: 13px;
    height: 13px;
    margin: 0;
    background-color: #fff;
    border: 1px solid #333;
}

.attrs input:disabled {
    border-color: #ccc;
}

.attrs input:checked::before {
    content: "";
    display: block;
    width: 9px;
    height: 5px;
    margin: 1px;
    border: solid #222;
    border-width: 0 0 1px 1px;
    transform: rotate(-45deg);
}

/* floating window */
.preview {
    position: absolute;
    left: 547px;
    top: 152px;
    width: 586px;
    height: 720px;
    display: flex;
    flex-direction: column;
    border: 1px solid #8c8c8c;
    box-shadow: 0 3px 14px rgba(0, 0, 0, 0.5);
}

.titlebar {
    display: flex;
    align-items: center;
    height: 30px;
    padding-left: 8px;
    background-color: #fff;
    color: #999;
    font-size: 11px;
}

.titlebar span {
    flex: 1;
    padding-left: 5px;
}

.titlebar button {
    width: 46px;
    display: flex;
    justify-content: center;
}

.titlebar button svg {
    width: 10px;
    height: 10px;
}

.resize {
    position: absolute;
    left: 435px;
    top: 0;
    width: 31px;
    height: 20px;
    display: flex;
    align-items: center;
    justify-content: center;
    background-color: #fff;
    border: 1px solid #888;
    border-top: none;
    border-radius: 0 0 5px 5px;
}

.resize svg {
    width: 18px;
    height: 10px;
}

.screen {
    flex: 1;
    background-color: #000;
}

/* taskbar */
.taskbar {
    display: flex;
    height: 46px;
    padding-top: 7px;
    margin-left: -22px;
    background-color: #000;
}

.taskbar button {
    width: 37px;
    height: 23px;
    display: flex;
    justify-content: center;
    align-items: flex-start;
}

.taskbar .open::after {
    content: "";
    position: absolute;
    width: 28px;
    height: 2px;
    margin-top: 21px;
    background-color: #82b4fb;
}
```
